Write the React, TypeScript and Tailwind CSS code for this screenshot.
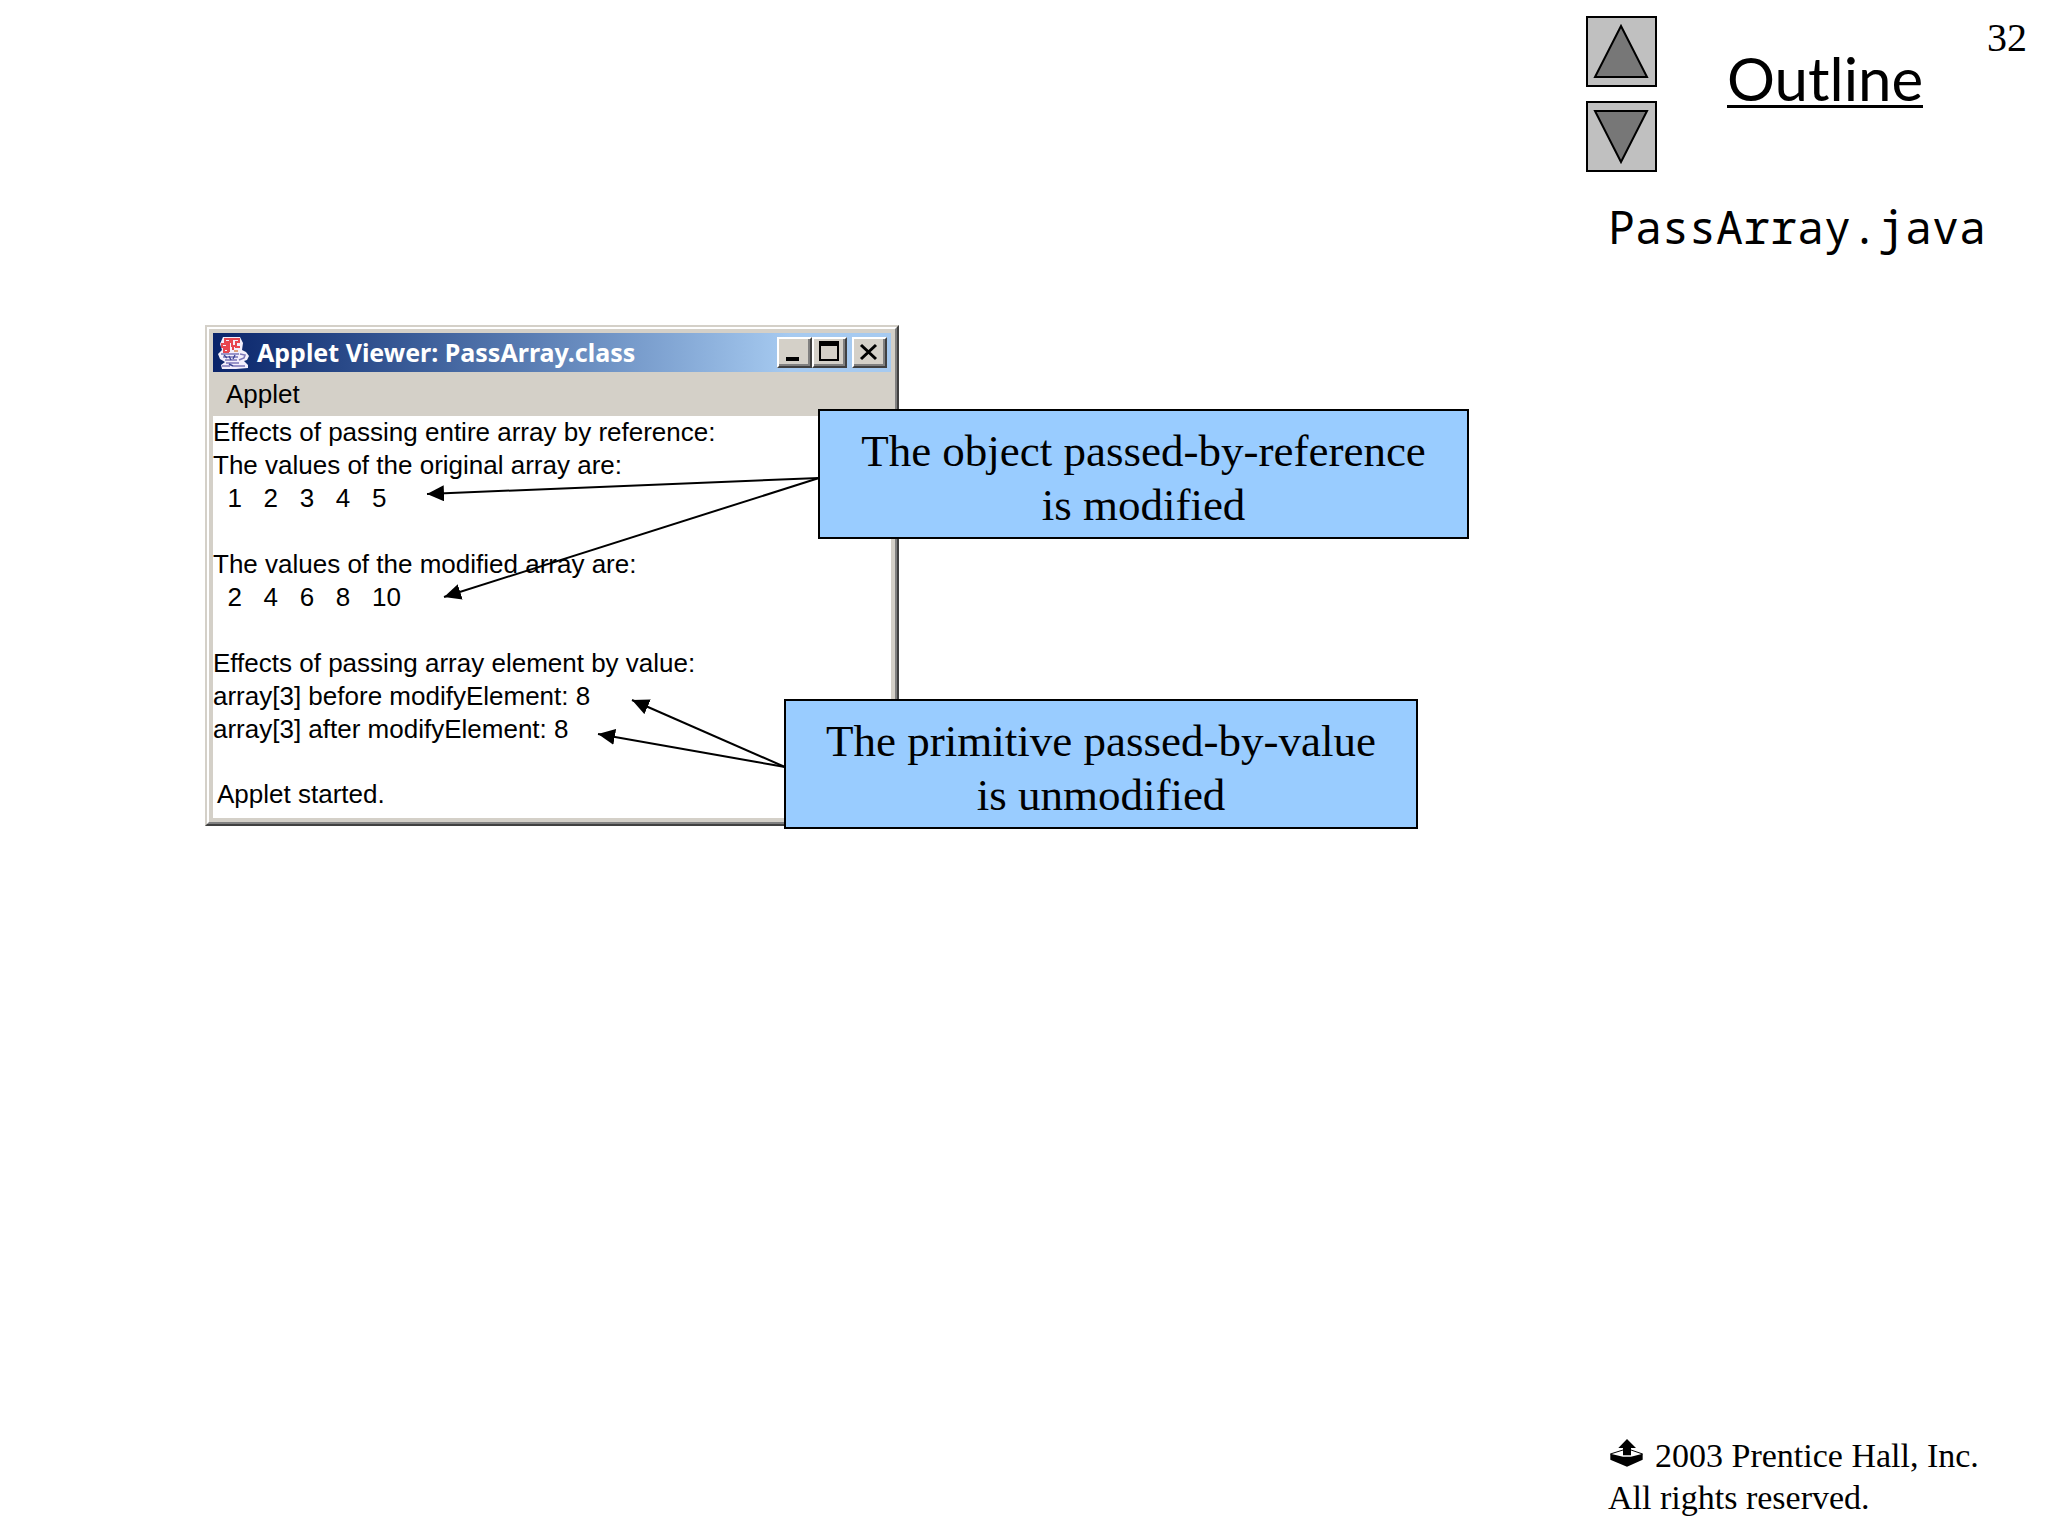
import type { ReactNode } from 'react'

const outputLines = [
  'Effects of passing entire array by reference:',
  'The values of the original array are:',
  '  1   2   3   4   5',
  '',
  'The values of the modified array are:',
  '  2   4   6   8   10',
  '',
  'Effects of passing array element by value:',
  'array[3] before modifyElement: 8',
  'array[3] after modifyElement: 8',
]

function JavaIcon() {
  return (
    <svg className="h-[34px] w-[34px]" viewBox="0 0 34 34" fill="none" aria-hidden="true">
      <path d="M6 1h17l3 6-1 7 4 2 3 4-2 4-3 1 4 4v3l-12 1H5l-1-4 4-3-5-3-2-5 4-4-2-6z" fill="#f3effc" />
      <path d="M8 3h5v3H8zM15 3h7v3h-3v4h-4zM5 8h5v3H5zM12 7v9M18 11h5M7 13h4v3H7zM16 14v-3" stroke="#e8464f" strokeWidth="2" />
      <path d="M17 14h4v2h-4z" fill="#e0a27c" />
      <path d="M4 18h18M6 21h15M8 24h12M23 18l5 1-1 3-5 2M9 27h13M5 30h8M16 30h12" stroke="#7c77b8" strokeWidth="1.6" />
      <path d="M7 19l3 3M12 20l2 4M18 19l-2 4M12 28l4 2" stroke="#3c4696" strokeWidth="1.4" />
    </svg>
  )
}

function WindowButton({ label, children }: { label: string; children: ReactNode }) {
  return (
    <button
      type="button"
      aria-label={label}
      className="h-[31px] w-[35px] border-2 border-t-white border-l-white border-r-[#404040] border-b-[#404040] bg-[#d4d0c8]"
    >
      <span className="flex h-full w-full items-center justify-center border-r-2 border-b-2 border-[#808080]">
        {children}
      </span>
    </button>
  )
}

function AppletWindow() {
  return (
    <section className="border-2 border-t-[#d4d0c8] border-l-[#d4d0c8] border-r-[#404040] border-b-[#404040]">
      <div className="border-2 border-t-white border-l-white border-r-[#808080] border-b-[#808080]">
        <div className="border-4 border-[#d4d0c8] bg-white">
          <header className="flex h-[39px] items-center bg-linear-to-r from-[#0a246a] to-[#a6caf0] to-85% pr-1 pl-1">
            <JavaIcon />
            <h2 className="ml-1.5 flex-1 pb-0.5 font-['Noto_Sans','Open_Sans',sans-serif] text-[25px] leading-8 font-bold whitespace-nowrap text-white">
              Applet Viewer: PassArray.class
            </h2>
            <WindowButton label="Minimize">
              <svg className="h-[23px] w-[27px]" viewBox="0 0 27 23" aria-hidden="true">
                <path d="M6 17h13v4H6z" fill="#000" />
              </svg>
            </WindowButton>
            <WindowButton label="Maximize">
              <svg className="h-[23px] w-[27px]" viewBox="0 0 27 23" aria-hidden="true">
                <path fillRule="evenodd" d="M4 1h20v20H4zM6 6v13h16V6z" fill="#000" />
              </svg>
            </WindowButton>
            <span className="w-[5px]" />
            <WindowButton label="Close">
              <svg className="h-[23px] w-[27px]" viewBox="0 0 27 23" aria-hidden="true">
                <path d="M6 5l15 14M21 5L6 19" stroke="#000" strokeWidth="3" />
              </svg>
            </WindowButton>
          </header>
          <nav className="flex h-[44px] items-center bg-[#d4d0c8] pl-[13px]">
            <button type="button" className="text-[26px] leading-8">Applet</button>
          </nav>
          <pre className="font-['Liberation_Sans',Arial,sans-serif] text-[26px] leading-[33px]">
            {outputLines.join('\n')}
          </pre>
          <p className="mt-8 mb-2 pl-1 text-[26px] leading-8">Applet started.</p>
        </div>
      </div>
    </section>
  )
}

function Callout({ className, children }: { className: string; children: ReactNode }) {
  return (
    <div
      className={`absolute flex h-[130px] items-center justify-center border-2 border-black bg-[#99ccff] pt-2 text-center font-['Liberation_Serif','Times_New_Roman',serif] text-[45px] leading-[54px] ${className}`}
    >
      <p>{children}</p>
    </div>
  )
}

// Arrows run from the callouts back to the lines of output they explain
function Arrows() {
  return (
    <svg className="absolute top-0 left-0 h-[502px] w-[694px]" viewBox="0 0 694 502" aria-hidden="true">
      <defs>
        <marker id="head" markerWidth="17" markerHeight="16" refX="17" refY="8" orient="auto" markerUnits="userSpaceOnUse">
          <path d="M0 0l17 8-17 8z" />
        </marker>
      </defs>
      <g stroke="#000" strokeWidth="2">
        <path d="M614 153L222 169" markerEnd="url(#head)" />
        <path d="M614 153L239 272" markerEnd="url(#head)" />
        <path d="M580 442L427 375" markerEnd="url(#head)" />
        <path d="M580 442L393 409" markerEnd="url(#head)" />
      </g>
    </svg>
  )
}

function NavButton({ label, points }: { label: string; points: string }) {
  return (
    <button type="button" aria-label={label} className="block h-[71px] w-[71px] border-2 border-black bg-[#c0c0c0]">
      <svg className="h-[67px] w-[67px]" viewBox="0 0 67 67" aria-hidden="true">
        <polygon points={points} fill="#777" stroke="#000" strokeWidth="2" />
      </svg>
    </button>
  )
}

function EjectIcon() {
  return (
    <svg className="mr-3 ml-0.5 inline-block h-[28px] w-[33px] align-baseline" viewBox="0 0 97 84" aria-hidden="true">
      <path d="M0 45l38-12M97 45L62 33" stroke="#000" strokeWidth="3" />
      <path d="M50 0l27 27H62v22H38V27H24z" />
      <path d="M0 44l38 9h24l35-9v18L50 83 0 62z" />
    </svg>
  )
}

export default function App() {
  return (
    <div className="flex min-h-screen bg-white font-['Liberation_Sans',Arial,sans-serif] text-black">
      <main className="flex-1 pt-[325px] pl-[205px]">
        <div className="relative w-[694px]">
          <AppletWindow />
          <Arrows />
          <Callout className="top-[84px] left-[613px] w-[651px]">
            The object passed-by-reference
            <br />
            is modified
          </Callout>
          <Callout className="top-[374px] left-[579px] w-[634px]">
            The primitive passed-by-value
            <br />
            is unmodified
          </Callout>
        </div>
      </main>

      <aside className="flex w-[462px] flex-col justify-between pt-4 pb-[17px]">
        <div>
          <div className="flex items-start">
            <div className="flex flex-col gap-3.5">
              <NavButton label="Previous" points="33,8 59,59 7,59" />
              <NavButton label="Next" points="33,59 59,8 7,8" />
            </div>
            <h1 className="mt-9 ml-[70px] border-b-[3px] border-black font-['Lato',sans-serif] text-[60px] leading-[53px] font-normal">
              Outline
            </h1>
            <span className="mr-[21px] ml-auto font-['Liberation_Serif',serif] text-[40px] leading-[44px]">32</span>
          </div>
          <p className="mt-7 pl-[22px] font-['Noto_Sans_Mono','DejaVu_Sans_Mono',monospace] text-[45px] leading-[54px]">
            PassArray.java
          </p>
        </div>
        <footer className="pl-[22px] font-['Liberation_Serif','Times_New_Roman',serif] text-[34px] leading-[42px]">
          <EjectIcon />
          2003 Prentice Hall, Inc.
          <br />
          All rights reserved.
        </footer>
      </aside>
    </div>
  )
}
